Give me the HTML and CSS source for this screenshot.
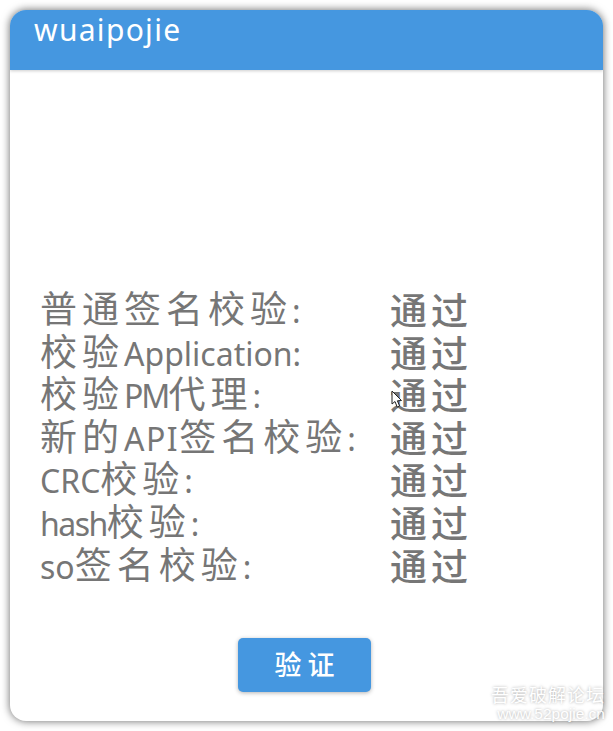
FILE: index.html
```html
<!DOCTYPE html>
<html lang="zh-CN">
<head>
<meta charset="utf-8">
<title>wuaipojie</title>
<link rel="stylesheet" href="styles.css">
</head>
<body>
<main class="window">
  <header class="appbar"><h1 class="title">wuaipojie</h1></header>
  <section class="content">
    <div class="checks">
      <div class="row"><span class="label">普通签名校验<span class="lat">:</span></span><span class="value">通过</span></div>
      <div class="row"><span class="label">校验<span class="lat">Application:</span></span><span class="value">通过</span></div>
      <div class="row"><span class="label">校验<span class="lat tighter">PM</span>代理<span class="lat">:</span></span><span class="value">通过</span></div>
      <div class="row"><span class="label">新的<span class="lat wide">API</span>签名校验<span class="lat">:</span></span><span class="value">通过</span></div>
      <div class="row"><span class="label"><span class="lat">CRC</span>校验<span class="lat">:</span></span><span class="value">通过</span></div>
      <div class="row"><span class="label"><span class="lat tight">hash</span>校验<span class="lat">:</span></span><span class="value">通过</span></div>
      <div class="row"><span class="label"><span class="lat">so</span>签名校验<span class="lat">:</span></span><span class="value">通过</span></div>
    </div>
    <button class="verify" type="button">验证</button>
  </section>
</main>
<svg class="cursor" width="12" height="19" viewBox="0 0 12 19" aria-hidden="true"><path d="M1 1 L1 14 L4 11.5 L6.2 17 L8.6 16 L6.4 10.8 L10.5 10.5 Z" fill="#fff" stroke="#222" stroke-width="1"/></svg>
<div class="watermark"><div class="wm-cn">吾爱破解论坛</div><div class="wm-en">www.52pojie.cn</div></div>
</body>
</html>
```
FILE: styles.css
```css
html, body {
  margin: 0;
  height: 731px;
  background: #fff;
  overflow: hidden;
}
body {
  position: relative;
  padding: 10px;
  box-sizing: border-box;
  font-family: "Noto Sans CJK SC", "Noto Sans", sans-serif;
}
.window {
  width: 593px;
  height: 711px;
  background: #fff;
  border-radius: 16px;
  overflow: hidden;
  box-shadow: 0 0 8px rgba(0, 0, 0, 0.6);
  display: flex;
  flex-direction: column;
}
.appbar {
  height: 60px;
  flex: none;
  background: #4597e0;
  box-shadow: 0 1px 3px rgba(0, 0, 0, 0.2);
  padding-left: 24px;
}
.title {
  margin: 0;
  color: #fff;
  font-family: "Noto Sans", sans-serif;
  font-weight: 400;
  font-size: 30px;
  line-height: 40px;
  letter-spacing: 1.3px;
}
.content {
  flex: 1;
  display: flex;
  flex-direction: column;
  align-items: center;
  padding-top: 216px;
}
.checks {
  align-self: stretch;
  padding-left: 30px;
  display: flex;
  flex-direction: column;
}
.row {
  display: grid;
  grid-template-columns: 350px auto;
  height: 42.6px;
  align-items: center;
  color: #767676;
  font-size: 37px;
  line-height: 42px;
}
.label {
  letter-spacing: 5px;
  white-space: nowrap;
}
.lat {
  font-family: "Noto Sans", sans-serif;
  font-size: 32px;
  letter-spacing: 0;
}
.lat.wide {
  letter-spacing: 1.5px;
}
.lat.tight {
  letter-spacing: -1.5px;
}
.lat.tighter {
  letter-spacing: -2px;
}
.value {
  letter-spacing: 4px;
  font-weight: 500;
  white-space: nowrap;
}
.verify {
  margin-top: 54px;
  margin-right: 4px;
  width: 133px;
  height: 54px;
  border: 0;
  border-radius: 5px;
  padding: 0 0 4px 6px;
  background: #4597e0;
  color: #fff;
  font-family: inherit;
  font-size: 27px;
  font-weight: 500;
  letter-spacing: 6px;
  box-shadow: 0 1px 4px rgba(0, 0, 0, 0.3);
}
.cursor {
  position: absolute;
  left: 391px;
  top: 390px;
}
.watermark {
  position: absolute;
  right: 8px;
  top: 683px;
  text-align: right;
  color: #fff;
  text-shadow: 0 0 3px rgba(0, 0, 0, 0.35);
}
.wm-cn {
  font-size: 18px;
  line-height: 22px;
  letter-spacing: 1px;
}
.wm-en {
  font-family: "Liberation Sans", sans-serif;
  font-size: 15.5px;
  line-height: 18px;
}
```
